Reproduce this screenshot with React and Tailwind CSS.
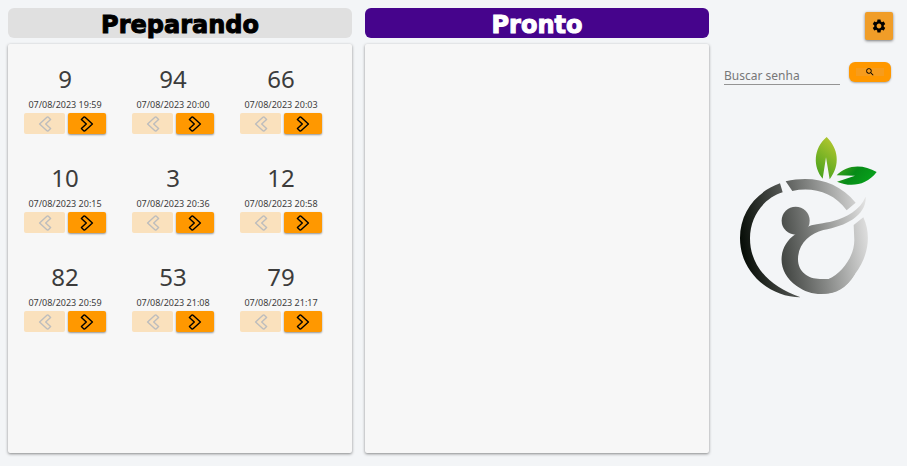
import React, { useState } from 'react';
import { MdSettings, MdSearch } from 'react-icons/md';

const orders = [
  { number: 9, time: '07/08/2023 19:59' },
  { number: 94, time: '07/08/2023 20:00' },
  { number: 66, time: '07/08/2023 20:03' },
  { number: 10, time: '07/08/2023 20:15' },
  { number: 3, time: '07/08/2023 20:36' },
  { number: 12, time: '07/08/2023 20:58' },
  { number: 82, time: '07/08/2023 20:59' },
  { number: 53, time: '07/08/2023 21:08' },
  { number: 79, time: '07/08/2023 21:17' },
];

function ArrowIcon({ className }) {
  return (
    <svg viewBox="0 0 14 16" className={className} fill="none" stroke="currentColor" strokeWidth="1.4" strokeLinejoin="round" aria-hidden="true">
      <path d="M1.4 3.4 3.9 1.1Q4.5.7 5.1 1.2L12.4 8 5.1 14.8Q4.5 15.3 3.9 14.9L1.4 12.6 6.3 8Z" />
    </svg>
  );
}

function OrderCard({ order }) {
  return (
    <li className="flex flex-col items-center">
      <span className="text-2xl leading-8 text-[#3c3c3c]">{order.number}</span>
      <time className="mt-0.5 text-[9px] leading-4 text-[#3c3c3c]">{order.time}</time>
      <div className="flex gap-[3px]">
        <button type="button" disabled aria-label="Voltar" className="flex h-[21px] w-[41px] items-center justify-center rounded-xs bg-[#fae1bd] text-[#bdbdbd]">
          <ArrowIcon className="h-4 w-3.5 rotate-180" />
        </button>
        <button type="button" aria-label="Avançar" className="flex h-[21px] w-[38px] items-center justify-center rounded-xs bg-[#ff9800] text-black shadow-[0_1px_2px_rgba(0,0,0,0.4)]">
          <ArrowIcon className="h-4 w-3.5" />
        </button>
      </div>
    </li>
  );
}

function Column({ title, titleClass, items }) {
  return (
    <section className="flex min-w-0 flex-col">
      <h2 className={`flex h-[30px] items-center justify-center rounded-md pt-1 font-['DejaVu_Sans',sans-serif] text-2xl font-bold [-webkit-text-stroke:1px] ${titleClass}`}>
        {title}
      </h2>
      <div className="mt-1.5 flex-1 rounded-xs bg-[#f7f7f7] pr-[17px] pl-[3px] pt-[19px] shadow-[0_1px_3px_rgba(0,0,0,0.45)]">
        <ul className="grid grid-cols-3 gap-y-7">
          {items.map(order => (
            <OrderCard key={order.number} order={order} />
          ))}
        </ul>
      </div>
    </section>
  );
}

function Logo() {
  return (
    <svg viewBox="0 0 480 525" className="w-40" role="img" aria-label="Logo">
      <defs>
        <linearGradient id="metal" gradientUnits="userSpaceOnUse" x1="30" y1="330" x2="415" y2="270">
          <stop offset="0" stopColor="#060c06" />
          <stop offset="0.35" stopColor="#4e514e" />
          <stop offset="0.6" stopColor="#858785" />
          <stop offset="1" stopColor="#e2e2e2" />
        </linearGradient>
        <linearGradient id="leafTop" x1="0.6" y1="0" x2="0.2" y2="1">
          <stop offset="0" stopColor="#b0c62f" />
          <stop offset="1" stopColor="#43a01c" />
        </linearGradient>
        <linearGradient id="leafSide" x1="0" y1="0" x2="1" y2="0.4">
          <stop offset="0" stopColor="#4aa51c" />
          <stop offset="0.5" stopColor="#068b17" />
          <stop offset="1" stopColor="#08a01c" />
        </linearGradient>
      </defs>
      <path fill="url(#leafTop)" d="M290 21C325 55 332 105 299 148L288 82 278 146C248 110 250 55 290 21Z" />
      <path fill="url(#leafSide)" d="M320 136C350 103 400 102 440 126C408 168 360 172 321 155L375 137Z" />
      <g fill="url(#metal)">
        <path d="M150 160C80 185 30 245 30 325C30 425 115 500 212 502C120 470 60 410 60 325C60 260 100 205 158 187Z" />
        <path d="M167 154C250 135 325 155 377 218L350 241C310 185 245 170 187 183Z" />
        <circle cx="197" cy="272" r="42" />
        {/* raised arm running into the body */}
        <path d="M407 200C390 240 350 262 310 273C280 281 255 282 238 288L197 312C140 350 140 428 200 468C255 508 335 500 375 432L296 447 270 447C235 447 204 426 204 388C204 340 240 310 280 300C350 288 410 255 407 200Z" />
        <path d="M400 262C425 315 415 380 375 432C335 500 285 495 240 485L270 447 296 447C335 430 373 380 373 330L371 285Z" />
      </g>
    </svg>
  );
}

export default function App() {
  const [search, setSearch] = useState('');

  return (
    <main className="grid min-h-screen grid-cols-[344fr_344fr_177fr] gap-x-[13px] bg-[#f3f5f7] px-2 pt-2 pb-[13px] font-['Noto_Sans',sans-serif]">
      <Column title="Preparando" titleClass="bg-[#e0e0e0] text-black" items={orders} />
      <Column title="Pronto" titleClass="bg-[#46048c] text-white" items={[]} />
      <aside className="flex min-w-0 flex-col pt-1">
        <button type="button" aria-label="Configurações" className="mr-1.5 flex size-7 items-center justify-center self-end rounded-xs bg-[#f09d28] text-black shadow-[0_1px_3px_rgba(0,0,0,0.5)]">
          <MdSettings className="size-4" />
        </button>
        <form className="mt-[22px] mr-2 flex gap-[9px] pl-0.5" onSubmit={e => e.preventDefault()}>
          <input
            type="text"
            aria-label="Buscar senha"
            placeholder="Buscar senha"
            value={search}
            onChange={e => setSearch(e.target.value)}
            className="h-[23px] min-w-0 flex-1 border-b border-[#949494] pt-1 text-xs outline-none placeholder:text-[#777777]"
          />
          <button type="submit" aria-label="Buscar" className="flex h-5 w-[42px] items-center justify-center rounded-md bg-[#ff9800] text-black shadow-[0_1px_2px_rgba(0,0,0,0.3)]">
            <span className="flex h-2 w-7 items-center justify-center bg-[#f79c1c]">
              <MdSearch className="size-2.5" />
            </span>
          </button>
        </form>
        <div className="mt-[45px] flex justify-center pr-0.5">
          <Logo />
        </div>
      </aside>
    </main>
  );
}
